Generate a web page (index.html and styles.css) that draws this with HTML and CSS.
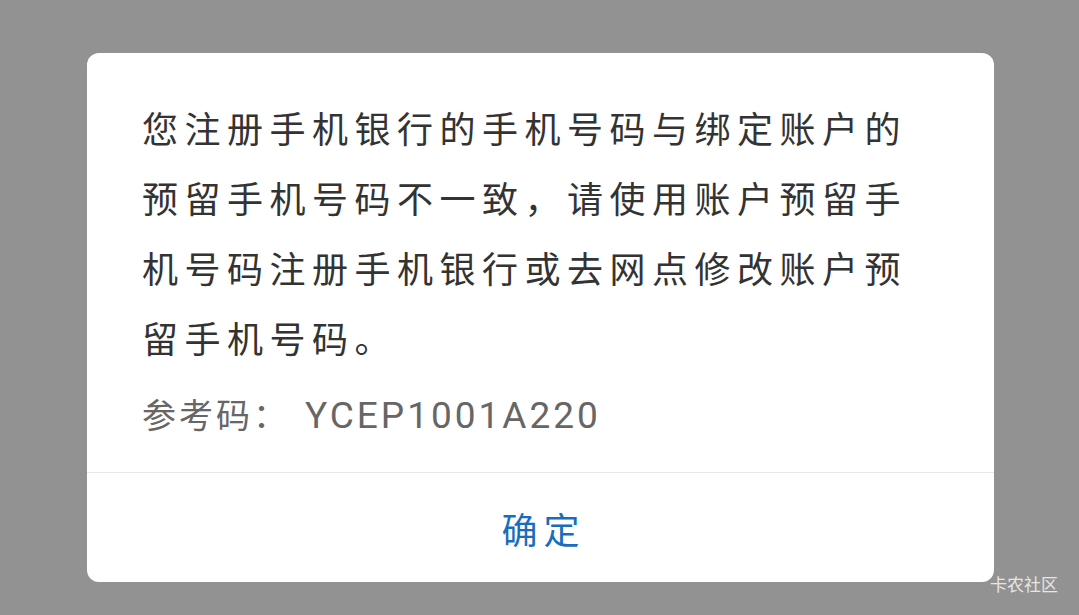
FILE: index.html
```html
<!DOCTYPE html>
<html lang="zh-CN">
<head>
  <meta charset="UTF-8">
  <title>提示</title>
  <link rel="stylesheet" href="styles.css">
</head>
<body>
  <div class="overlay">
    <div class="dialog">
      <div class="dialog-body">
        <p class="message">您注册手机银行的手机号码与绑定账户的预留手机号码不一致，请使用账户预留手机号码注册手机银行或去网点修改账户预留手机号码。</p>
        <p class="ref-code">参考码：<span class="code">YCEP1001A220</span></p>
      </div>
      <div class="dialog-footer">
        <button class="btn-ok">确定</button>
      </div>
    </div>
    <span class="watermark">卡农社区</span>
  </div>
</body>
</html>
```

FILE: styles.css
```css
* {
  margin: 0;
  padding: 0;
  box-sizing: border-box;
}

body {
  font-family: "Noto Sans CJK SC", "Noto Sans", sans-serif;
  background: #929292;
  width: 1079px;
  height: 615px;
  overflow: hidden;
}

.overlay {
  position: relative;
  height: 100%;
  padding-top: 53px;
}

.dialog {
  width: 907px;
  height: 529px;
  margin-left: 87px;
  background: #fff;
  border-radius: 12px;
  display: flex;
  flex-direction: column;
  overflow: hidden;
}

.dialog-body {
  flex: 1;
  padding: 39px 55px 0 55px;
}

.message {
  font-size: 36px;
  line-height: 70px;
  letter-spacing: 6.5px;
  color: #333;
}

.ref-code {
  margin-top: 7px;
  font-size: 34px;
  line-height: 70px;
  letter-spacing: 3px;
  color: #666;
}

.ref-code .code {
  font-family: Roboto, "Noto Sans", sans-serif;
  font-size: 37px;
  letter-spacing: 3px;
  margin-left: 15px;
}

.dialog-footer {
  height: 110px;
  border-top: 1px solid #e8e8e8;
  display: flex;
  align-items: center;
  justify-content: center;
}

.btn-ok {
  border: none;
  background: none;
  font-family: inherit;
  font-size: 36px;
  letter-spacing: 6px;
  color: #1a6dbd;
  padding-left: 6px;
}

.watermark {
  position: absolute;
  right: 21px;
  bottom: 19px;
  font-size: 17px;
  color: #e6e6e6;
}
```
